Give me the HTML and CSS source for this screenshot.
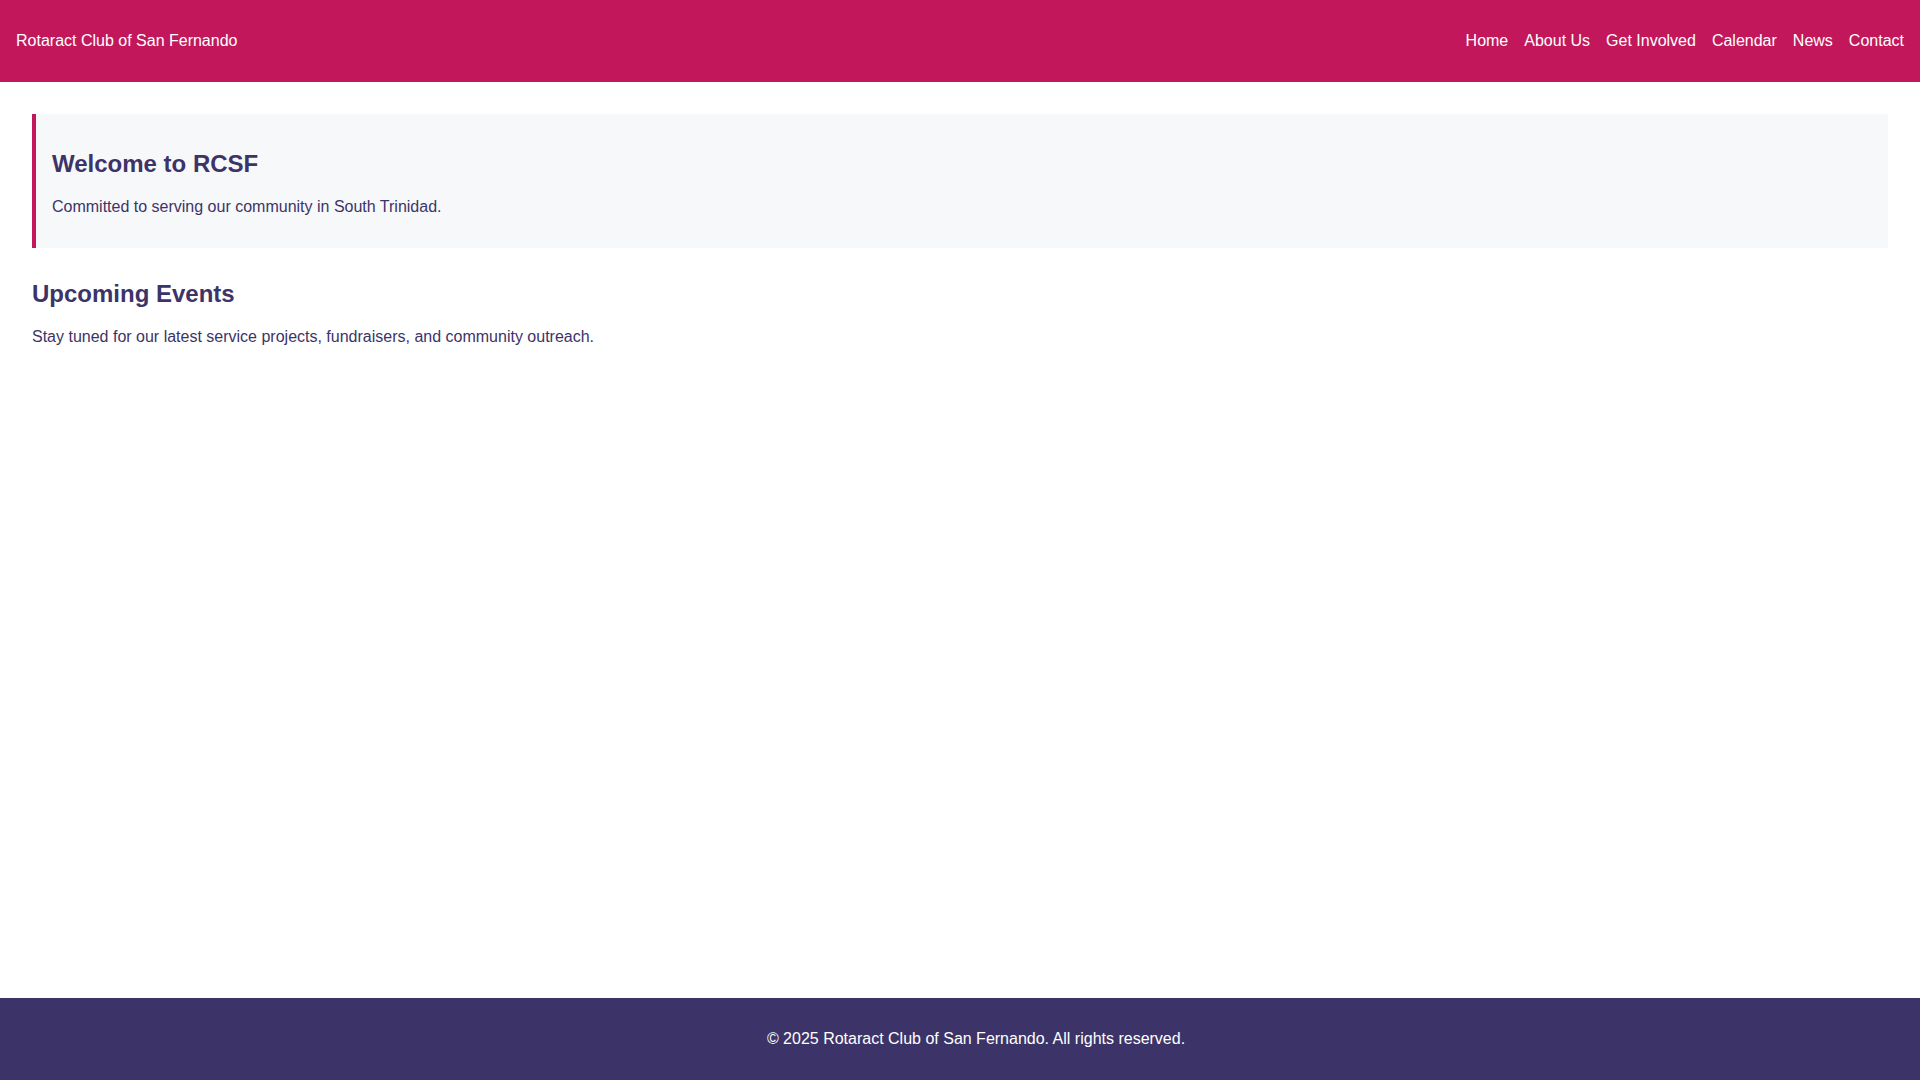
FILE: index.html
```html
<!DOCTYPE html>
<html lang="en">
<head>
<meta charset="utf-8">
<title>Rotaract Club of San Fernando</title>
<link rel="stylesheet" href="styles.css">
</head>
<body>
<header class="site-header">
  <div class="brand">Rotaract Club of San Fernando</div>
  <nav class="nav">
    <a href="#">Home</a>
    <a href="#">About Us</a>
    <a href="#">Get Involved</a>
    <a href="#">Calendar</a>
    <a href="#">News</a>
    <a href="#">Contact</a>
  </nav>
</header>
<main class="content">
  <section class="hero">
    <h2>Welcome to RCSF</h2>
    <p>Committed to serving our community in South Trinidad.</p>
  </section>
  <section class="events">
    <h2>Upcoming Events</h2>
    <p>Stay tuned for our latest service projects, fundraisers, and community outreach.</p>
  </section>
</main>
<footer class="site-footer">
  <p>&copy; 2025 Rotaract Club of San Fernando. All rights reserved.</p>
</footer>
</body>
</html>
```

FILE: styles.css
```css
html, body {
  margin: 0;
  padding: 0;
}
body {
  font-family: Arial, "Liberation Sans", Helvetica, sans-serif;
  font-size: 16px;
  color: #3c3468;
  background: #ffffff;
  min-height: 100vh;
  display: flex;
  flex-direction: column;
  overflow-x: hidden;
}
.site-header {
  background: #c2185b;
  color: #ffffff;
  padding: 32px 16px;
  display: flex;
  justify-content: space-between;
  align-items: center;
}
.brand {
  font-size: 16px;
}
.nav {
  display: flex;
  gap: 16px;
}
.nav a {
  color: #ffffff;
  text-decoration: none;
}
.content {
  flex: 1;
  padding: 32px;
}
.hero {
  background: #f7f8fa;
  border-left: 4px solid #c2185b;
  padding: 16px;
  margin-bottom: 32px;
}
.content h2 {
  font-size: 24px;
  margin: 0.83em 0;
}
.site-footer {
  background: #3c3468;
  color: #ffffff;
  text-align: center;
  padding: 16px 0 16px 32px;
}
.site-footer p {
  margin: 16px 0;
}
```
